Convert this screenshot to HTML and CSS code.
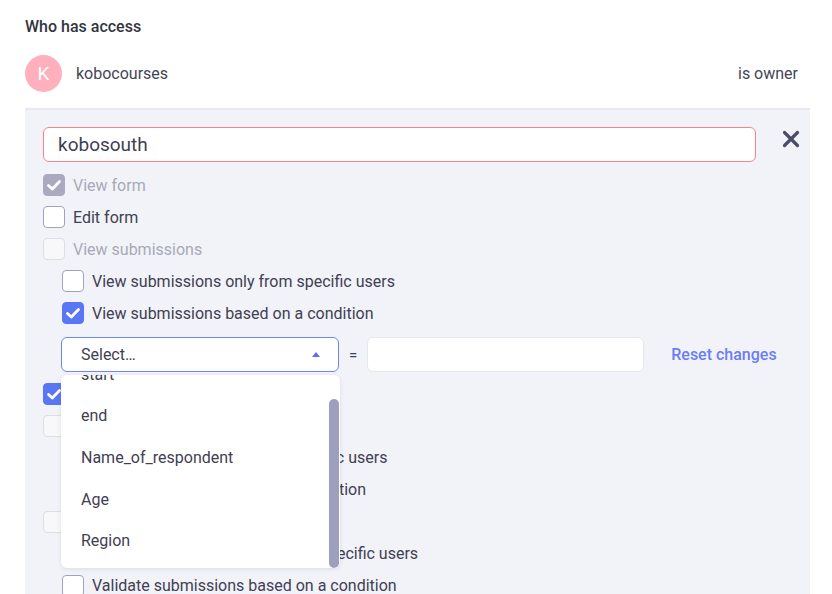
FILE: index.html
```html
<!DOCTYPE html>
<html>
<head>
<meta charset="utf-8">
<link rel="stylesheet" href="styles.css">
</head>
<body>
<div class="page">
  <h2 class="title">Who has access</h2>
  <div class="owner-row">
    <span class="avatar">K</span>
    <span class="owner-name">kobocourses</span>
    <span class="owner-role">is owner</span>
  </div>
  <div class="panel">
    <div class="user-row">
      <div class="user-input">kobosouth</div>
      <button class="close" aria-label="close">
        <svg width="18" height="18" viewBox="0 0 18 18"><path d="M2.5 2.5 L15.5 15.5 M15.5 2.5 L2.5 15.5" stroke="#4a4d69" stroke-width="3.2" stroke-linecap="round"/></svg>
      </button>
    </div>
    <div class="perms">
      <label class="perm disabled"><span class="cb cb-gray"><svg viewBox="0 0 22 22"><path d="M5.5 11.5 L9.3 15 L16.5 7.5" fill="none" stroke="#fff" stroke-width="2.8" stroke-linecap="round" stroke-linejoin="round"/></svg></span>View form</label>
      <label class="perm"><span class="cb"></span>Edit form</label>
      <label class="perm disabled"><span class="cb cb-off"></span>View submissions</label>
      <label class="perm sub"><span class="cb"></span>View submissions only from specific users</label>
      <label class="perm sub"><span class="cb cb-blue"><svg viewBox="0 0 22 22"><path d="M5.5 11.5 L9.3 15 L16.5 7.5" fill="none" stroke="#fff" stroke-width="2.8" stroke-linecap="round" stroke-linejoin="round"/></svg></span>View submissions based on a condition</label>
      <div class="cond-row">
        <div class="select-wrap">
          <div class="select">Select…<span class="caret"></span></div>
          <div class="menu">
            <div class="menu-list">
              <div class="opt">start</div>
              <div class="opt">end</div>
              <div class="opt">Name_of_respondent</div>
              <div class="opt">Age</div>
              <div class="opt">Region</div>
              <div class="opt">Gender</div>
            </div>
            <span class="scrollbar"></span>
          </div>
        </div>
        <span class="eq">=</span>
        <div class="cond-input"></div>
        <a class="reset">Reset changes</a>
      </div>
      <label class="perm"><span class="cb cb-blue"><svg viewBox="0 0 22 22"><path d="M5.5 11.5 L9.3 15 L16.5 7.5" fill="none" stroke="#fff" stroke-width="2.8" stroke-linecap="round" stroke-linejoin="round"/></svg></span>Add submissions</label>
      <label class="perm disabled"><span class="cb cb-off"></span>Edit submissions</label>
      <label class="perm sub"><span class="cb"></span>Edit submissions only from specific users</label>
      <label class="perm sub"><span class="cb"></span>Edit submissions based on a condition</label>
      <label class="perm disabled"><span class="cb cb-off"></span>Validate submissions</label>
      <label class="perm sub"><span class="cb"></span>Validate submissions only from specific users</label>
      <label class="perm sub"><span class="cb"></span>Validate submissions based on a condition</label>
    </div>
  </div>
</div>
</body>
</html>
```

FILE: styles.css
```css
* { box-sizing: border-box; }
html, body { margin: 0; padding: 0; background: #fff; }
body {
  font-family: Roboto, "Noto Sans", "Liberation Sans", sans-serif;
  color: #3f4053;
  width: 832px;
  height: 594px;
  overflow: hidden;
}
.page {
  padding: 17px 22px 0 25px;
}
.title {
  margin: 0;
  font-size: 16px;
  line-height: 20px;
  font-weight: 500;
  color: #33343f;
}
.owner-row {
  display: flex;
  align-items: center;
  margin-top: 18px;
  height: 37px;
  padding-right: 12px;
  font-size: 16px;
}
.avatar {
  width: 37px;
  height: 37px;
  border-radius: 50%;
  background: #ffb0bc;
  color: #fff;
  display: flex;
  align-items: center;
  justify-content: center;
  font-size: 19px;
  margin-right: 14px;
}
.owner-name { flex: 1; color: #444558; }
.owner-role { color: #444558; }
.panel {
  margin-top: 16px;
  background: #f2f3f8;
  border-top: 2px solid #e8e9f0;
  padding: 17px 10px 0 18px;
  height: 500px;
}
.user-row {
  display: flex;
  align-items: flex-start;
}
.user-input {
  flex: 1;
  height: 35px;
  border: 1.5px solid #f7838c;
  border-radius: 6px;
  background: #fff;
  font-size: 19px;
  line-height: 33px;
  padding-left: 14px;
  color: #3f4053;
}
.close {
  border: 0;
  background: none;
  padding: 0;
  margin: 3px 0 0 26px;
  width: 18px;
  height: 18px;
  display: block;
}
.close svg { display: block; }
.perms {
  margin-top: 7px;
  display: flex;
  flex-direction: column;
}
.perm {
  display: flex;
  align-items: center;
  height: 32px;
  font-size: 16px;
  gap: 8px;
  color: #3f4053;
}
.perm.sub { padding-left: 19px; }
.perm.disabled { color: #a8a9b7; }
.cb {
  width: 22px;
  height: 22px;
  flex: none;
  border: 1.5px solid #a2a2bd;
  border-radius: 4px;
  background: #fff;
  display: flex;
  align-items: center;
  justify-content: center;
}
.cb svg { width: 22px; height: 22px; display: block; flex: none; }
.cb-gray { background: #a9aabf; border-color: #a9aabf; }
.cb-blue { background: #5a76f5; border-color: #5a76f5; }
.cb-off { background: #f8f8fb; border-color: #dcdde6; }
.cond-row {
  display: flex;
  align-items: center;
  margin: 8px 0 5.5px 18px;
  height: 35px;
}
.select-wrap {
  position: relative;
  width: 278px;
  height: 35px;
}
.select {
  height: 35px;
  border: 1.5px solid #6d87f4;
  border-radius: 6px;
  background: #fff;
  font-size: 16px;
  line-height: 33px;
  padding-left: 19px;
  color: #3f4053;
  position: relative;
}
.caret {
  position: absolute;
  right: 18px;
  top: 14px;
  width: 0;
  height: 0;
  border-left: 4.5px solid transparent;
  border-right: 4.5px solid transparent;
  border-bottom: 5px solid #5a6ff5;
}
.menu {
  position: absolute;
  left: 0;
  top: 38px;
  width: 279px;
  height: 193px;
  background: #fff;
  border-radius: 6px;
  box-shadow: 0 1px 4px rgba(60, 60, 90, 0.12);
  overflow: hidden;
  z-index: 5;
}
.menu-list { margin-top: -21.5px; }
.opt {
  height: 41.7px;
  line-height: 41.7px;
  padding-left: 20px;
  font-size: 16px;
  color: #3f4053;
}
.scrollbar {
  position: absolute;
  right: 1px;
  top: 24px;
  bottom: 0;
  width: 10px;
  border-radius: 5px;
  background: #9e9fbe;
}
.eq {
  margin: 0 10px;
  font-size: 15px;
  color: #3f4053;
}
.cond-input {
  width: 277px;
  height: 35px;
  background: #fff;
  border: 1px solid #e6e7ef;
  border-radius: 6px;
}
.reset {
  margin-left: 27px;
  font-size: 16px;
  font-weight: 500;
  color: #6b7df6;
}
```
